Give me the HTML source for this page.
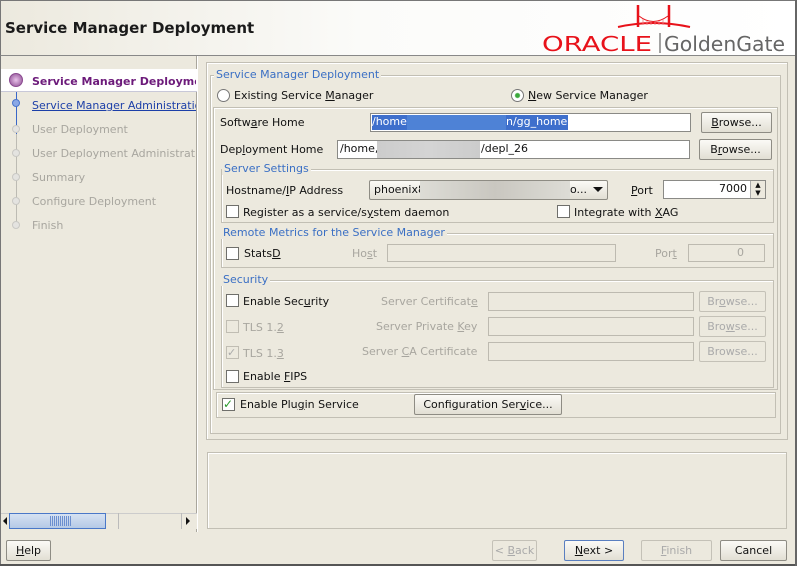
<!DOCTYPE html>
<html><head><meta charset="utf-8"><style>
*{box-sizing:border-box;margin:0;padding:0}
body{width:797px;height:566px;background:#ece9de;font-family:"DejaVu Sans","Liberation Sans",sans-serif;font-size:11px;color:#111;position:relative;overflow:hidden}
.a{position:absolute}
.hdr{left:0;top:0;width:797px;height:56px;background:linear-gradient(90deg,#ece9de 0%,#fbfbf9 45%,#fff 100%);border:1px solid #777;border-bottom:1px solid #888}
.t{white-space:nowrap;padding-top:1px}
.grp{border:1px solid #c2bfb4;box-shadow:inset 1px 1px 0 #fff}
.lg{color:#3a6fc4;background:#ece9de;padding:0 2px;white-space:nowrap}
.inp{background:#fff;border:1px solid #8a8a86}
.dis{background:#ece9de;border:1px solid #bdbab0}
.btn{border:1px solid #8e8c84;border-radius:2px;background:linear-gradient(#fbfaf6,#e2dfd4);text-align:center;line-height:20px;white-space:nowrap}
.btnd{border:1px solid #c4c1b7;border-radius:2px;background:#ece9de;color:#aaa;text-align:center;line-height:20px}
.cb{width:13px;height:13px;border:1px solid #6f6f6b;background:#fff}
.cbd{width:13px;height:13px;border:1px solid #c0bdb3;background:#ece9de}
.g{color:#a8a69f}
u{text-decoration:underline}
.dot{width:8px;height:8px;border-radius:50%;background:#e4e3e0;border:1px solid #c9c8c4}
</style></head><body>
<div class="a hdr"></div>
<div class="a t" style="left:5px;top:18px;font-size:15px;font-weight:bold;color:#1a1a1a">Service Manager Deployment</div>
<svg class="a" style="left:540px;top:2px" width="250" height="52" viewBox="0 0 250 52">
<g stroke="#e8121a" fill="none" stroke-width="2.5">
<line x1="98" y1="3" x2="98" y2="25"/><line x1="129" y1="3" x2="129" y2="25"/>
<path d="M78 25 Q113 17 150 25" stroke-width="2"/>
<path d="M99 14 Q113 25 128 14" stroke-width="1"/>
</g>
<g stroke="#f07a7e" stroke-width="0.8"><line x1="103" y1="17" x2="103" y2="23"/><line x1="107" y1="19" x2="107" y2="23"/><line x1="111" y1="20" x2="111" y2="23"/><line x1="115" y1="20" x2="115" y2="23"/><line x1="119" y1="19" x2="119" y2="23"/><line x1="123" y1="17" x2="123" y2="23"/></g>
<text x="2" y="49" font-family="DejaVu Sans,sans-serif" font-size="20" fill="#e8121a" textLength="110" lengthAdjust="spacingAndGlyphs" transform="scale(1,1)">ORACLE</text>
<line x1="120" y1="31" x2="120" y2="51" stroke="#666" stroke-width="1.2"/>
<text x="124" y="49" font-family="DejaVu Sans,sans-serif" font-size="20" fill="#666" textLength="121" lengthAdjust="spacingAndGlyphs">GoldenGate</text>
</svg>
<div class="a" style="left:0;top:56px;width:1px;height:508px;background:#777"></div>
<div class="a" style="left:196px;top:56px;width:2px;height:476px;border-left:1px solid #a9a69c;border-right:1px solid #fff"></div>
<div class="a" style="left:1px;top:69px;width:196px;height:23px;background:#fff;border-bottom:1px solid #c8c8d8"></div>
<div class="a" style="left:16px;top:92px;width:1px;height:42px;background:#3a67c8"></div>
<div class="a" style="left:16px;top:134px;width:1px;height:92px;background:#bdbbb3"></div>
<div class="a" style="left:9px;top:73px;width:14px;height:14px;border-radius:50%;background:radial-gradient(#e9c2ea,#8a4a90);border:1px solid #8a4a90"></div>
<div class="a dot" style="left:12px;top:99px;background:#8aa8e6;border-color:#4a75cc"></div>
<div class="a dot" style="left:12px;top:125px"></div>
<div class="a dot" style="left:12px;top:149px"></div>
<div class="a dot" style="left:12px;top:173px"></div>
<div class="a dot" style="left:12px;top:197px"></div>
<div class="a dot" style="left:12px;top:221px"></div>
<div class="a t" style="left:32px;top:74px;font-weight:bold;color:#6c1a7a;width:164px;overflow:hidden">Service Manager Deployment</div>
<div class="a t" style="left:32px;top:98px;color:#1c3fa8;text-decoration:underline;width:164px;overflow:hidden">Service Manager Administration</div>
<div class="a t g" style="left:32px;top:122px">User Deployment</div>
<div class="a t g" style="left:32px;top:146px;width:164px;overflow:hidden">User Deployment Administration</div>
<div class="a t g" style="left:32px;top:170px">Summary</div>
<div class="a t g" style="left:32px;top:194px">Configure Deployment</div>
<div class="a t g" style="left:32px;top:218px">Finish</div>
<div class="a" style="left:1px;top:513px;width:196px;height:16px;background:#ece9de;border-top:1px solid #ccc"></div>
<div class="a" style="left:9px;top:513px;width:97px;height:16px;background:linear-gradient(#d6e2f2,#b5c9e6);border:1px solid #4a78c8"></div>
<div class="a" style="left:50px;top:516px;width:22px;height:10px;background:repeating-linear-gradient(90deg,#6b8fd0 0 1px,transparent 1px 2px)"></div>
<div class="a" style="left:3px;top:517px;width:0;height:0;border:4px solid transparent;border-right:4px solid #111;border-left:0"></div>
<div class="a" style="left:118px;top:513px;width:1px;height:16px;background:#bbb"></div>
<div class="a" style="left:181px;top:513px;width:15px;height:16px;border-left:1px solid #bbb"></div>
<div class="a" style="left:186px;top:517px;width:0;height:0;border:4px solid transparent;border-left:4px solid #111;border-right:0"></div>
<div class="a grp" style="left:206px;top:62px;width:582px;height:378px"></div>
<div class="a grp" style="left:210px;top:75px;width:571px;height:359px"></div>
<div class="a lg" style="left:214px;top:68px">Service Manager Deployment</div>
<div class="a" style="left:217px;top:89px;width:13px;height:13px;border-radius:50%;border:1px solid #777;background:#fff"></div>
<div class="a t" style="left:234px;top:88px">Existing Service <u>M</u>anager</div>
<div class="a" style="left:511px;top:89px;width:13px;height:13px;border-radius:50%;border:1px solid #777;background:radial-gradient(#3ca83c 0 2px,#fff 3px)"></div>
<div class="a t" style="left:528px;top:88px"><u>N</u>ew Service Manager</div>
<div class="a grp" style="left:213px;top:107px;width:565px;height:283px"></div>
<div class="a t" style="left:220px;top:115px">Softw<u>a</u>re Home</div>
<div class="a inp" style="left:370px;top:113px;width:321px;height:19px"></div>
<div class="a" style="left:372px;top:115px;width:196px;height:15px;background:#3e6fcc"></div>
<div class="a t" style="left:372px;top:114px;color:#fff">/home</div>
<div class="a t" style="left:506px;top:114px;color:#fff">n/gg_home</div>
<div class="a" style="left:407px;top:115px;width:99px;height:15px;background:#4e82d6"></div>
<div class="a btn" style="left:701px;top:112px;width:71px;height:21px"><u>B</u>rowse...</div>
<div class="a t" style="left:220px;top:142px">Dep<u>l</u>oyment Home</div>
<div class="a inp" style="left:337px;top:140px;width:353px;height:19px"></div>
<div class="a t" style="left:340px;top:141px">/home,</div>
<div class="a" style="left:377px;top:141px;width:103px;height:17px;background:linear-gradient(90deg,#ccc,#d4d4d4,#ccc)"></div>
<div class="a t" style="left:481px;top:141px">/depl_26</div>
<div class="a btn" style="left:699px;top:139px;width:73px;height:21px">B<u>r</u>owse...</div>
<div class="a grp" style="left:221px;top:169px;width:553px;height:54px"></div>
<div class="a lg" style="left:222px;top:162px">Server Settings</div>
<div class="a t" style="left:226px;top:183px">Hostname/<u>I</u>P Address</div>
<div class="a btn" style="left:369px;top:180px;width:239px;height:20px;text-align:left;padding-left:4px;line-height:18px">phoenix8</div>
<div class="a" style="left:420px;top:181px;width:150px;height:18px;background:linear-gradient(90deg,#dddcd6,#c9c7c0,#dddcd6)"></div>
<div class="a t" style="left:570px;top:182px">o...</div>
<div class="a" style="left:593px;top:187px;border:5px solid transparent;border-top:5px solid #111;border-bottom:0"></div>
<div class="a t" style="left:631px;top:183px"><u>P</u>ort</div>
<div class="a inp" style="left:663px;top:180px;width:103px;height:19px"></div>
<div class="a t" style="left:719px;top:181px">7000</div>
<div class="a" style="left:750px;top:181px;width:15px;height:17px;border-left:1px solid #aaa;background:#ece9de;font-size:7px;line-height:8px;text-align:center">▲<br>▼</div>
<div class="a cb" style="left:226px;top:205px"></div>
<div class="a t" style="left:243px;top:205px">Register as a service/s<u>y</u>stem daemon</div>
<div class="a cb" style="left:557px;top:205px"></div>
<div class="a t" style="left:574px;top:205px">Integrate with <u>X</u>AG</div>
<div class="a grp" style="left:221px;top:233px;width:553px;height:35px"></div>
<div class="a lg" style="left:221px;top:226px">Remote Metrics for the Service Manager</div>
<div class="a cb" style="left:226px;top:247px"></div>
<div class="a t" style="left:244px;top:246px">Stats<u>D</u></div>
<div class="a t g" style="left:352px;top:246px">Ho<u>s</u>t</div>
<div class="a dis" style="left:387px;top:244px;width:229px;height:18px"></div>
<div class="a t g" style="left:655px;top:246px">Por<u>t</u></div>
<div class="a dis" style="left:688px;top:244px;width:77px;height:18px"></div>
<div class="a t g" style="left:737px;top:245px">0</div>
<div class="a grp" style="left:221px;top:280px;width:553px;height:108px"></div>
<div class="a lg" style="left:221px;top:273px">Security</div>
<div class="a cb" style="left:226px;top:294px"></div>
<div class="a t" style="left:243px;top:294px">Enable Sec<u>u</u>rity</div>
<div class="a cbd" style="left:226px;top:320px"></div>
<div class="a t g" style="left:243px;top:320px">TLS 1.<u>2</u></div>
<div class="a cbd" style="left:226px;top:346px;color:#aaa;font-size:11px;line-height:11px">✓</div>
<div class="a t g" style="left:243px;top:346px">TLS 1.<u>3</u></div>
<div class="a cb" style="left:226px;top:370px"></div>
<div class="a t" style="left:243px;top:369px">Enable <u>F</u>IPS</div>
<div class="a t g" style="left:381px;top:294px">Server Certificat<u>e</u></div>
<div class="a t g" style="left:376px;top:319px">Server Private <u>K</u>ey</div>
<div class="a t g" style="left:362px;top:344px">Server <u>C</u>A Certificate</div>
<div class="a dis" style="left:488px;top:292px;width:206px;height:19px"></div>
<div class="a dis" style="left:488px;top:317px;width:206px;height:19px"></div>
<div class="a dis" style="left:488px;top:342px;width:206px;height:19px"></div>
<div class="a btnd" style="left:699px;top:291px;width:67px;height:21px">Br<u>o</u>wse...</div>
<div class="a btnd" style="left:699px;top:316px;width:67px;height:21px">Bro<u>w</u>se...</div>
<div class="a btnd" style="left:699px;top:341px;width:67px;height:21px">Browse...</div>
<div class="a grp" style="left:216px;top:392px;width:560px;height:26px"></div>
<div class="a cb" style="left:222px;top:398px;color:#2a9a2a;font-size:12px;line-height:11px;font-weight:bold">✓</div>
<div class="a t" style="left:240px;top:397px">Enable Plu<u>g</u>in Service</div>
<div class="a btn" style="left:414px;top:394px;width:148px;height:21px">Configuration Ser<u>v</u>ice...</div>
<div class="a grp" style="left:207px;top:452px;width:580px;height:77px;background:#ece9de"></div>
<div class="a btn" style="left:6px;top:540px;width:45px;height:21px"><u>H</u>elp</div>
<div class="a btnd" style="left:492px;top:540px;width:45px;height:21px">&lt; <u>B</u>ack</div>
<div class="a btn" style="left:564px;top:540px;width:60px;height:21px;border-color:#5a7fc0"><u>N</u>ext &gt;</div>
<div class="a btnd" style="left:641px;top:540px;width:71px;height:21px"><u>F</u>inish</div>
<div class="a btn" style="left:720px;top:540px;width:67px;height:21px">Cancel</div>
<div class="a" style="left:0;top:564px;width:797px;height:2px;background:#555"></div>
<div class="a" style="left:795px;top:0;width:2px;height:566px;background:#666"></div>
</body></html>
